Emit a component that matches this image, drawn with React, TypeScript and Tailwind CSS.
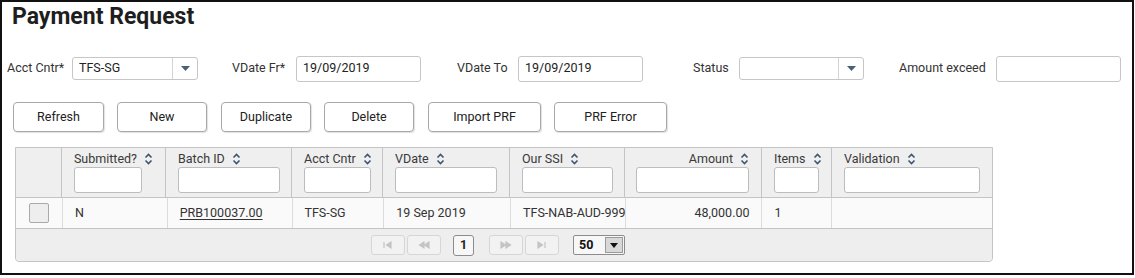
import React from 'react';

const cols = [
  { key: 'chk', label: '', width: 'w-[46px]', input: '' },
  { key: 'sub', label: 'Submitted?', width: 'w-[105px]', input: 'w-[68px]' },
  { key: 'batch', label: 'Batch ID', width: 'w-[126px]', input: 'w-[102px]' },
  { key: 'acct', label: 'Acct Cntr', width: 'w-[91px]', input: 'w-[67px]' },
  { key: 'vdate', label: 'VDate', width: 'w-[127px]', input: 'w-[102px]' },
  { key: 'ssi', label: 'Our SSI', width: 'w-[115px]', input: 'w-[91px]' },
  { key: 'amount', label: 'Amount', width: 'w-[137px]', input: 'w-[113px]', right: true },
  { key: 'items', label: 'Items', width: 'w-[70px]', input: 'w-[45px]' },
  { key: 'valid', label: 'Validation', width: 'w-[161px]', input: 'w-[136px]' },
];

function SortIcon() {
  return (
    <svg width="9" height="12" viewBox="0 0 9 12" fill="none" stroke="#3d5570" strokeWidth="1.6" className="shrink-0">
      <path d="M1.5 4.5L4.5 1.5L7.5 4.5" />
      <path d="M1.5 7.5L4.5 10.5L7.5 7.5" />
    </svg>
  );
}

function DownArrow() {
  return (
    <svg width="9" height="5" viewBox="0 0 9 5">
      <path d="M0 0H9L4.5 5Z" fill="#4a6078" />
    </svg>
  );
}

function FilterSelect({ value, width }: { value: string; width: string }) {
  return (
    <div className={`${width} h-[23px] flex items-stretch rounded-[3px] border border-[#c6c6c6] bg-white`}>
      <div className="flex-1 flex items-center pl-[6px] text-[#222]">{value}</div>
      <div className="w-[25px] border-l border-[#d4d4d4] flex items-center justify-center">
        <DownArrow />
      </div>
    </div>
  );
}

function FilterInput({ value, width }: { value: string; width: string }) {
  return (
    <div className={`${width} h-[26px] flex items-center rounded-[3px] border border-[#c6c6c6] bg-white pl-[6px] text-[#222]`}>
      {value}
    </div>
  );
}

function ActionButton({ label, width }: { label: string; width: string }) {
  return (
    <button className={`${width} h-[30px] rounded-[4px] border border-[#a8a8a8] bg-white text-[12.5px] text-[#222] shadow-[1px_1px_1px_rgba(0,0,0,0.12)]`}>
      {label}
    </button>
  );
}

function PagerButton({ kind }: { kind: 'first' | 'prev' | 'next' | 'last' }) {
  const glyph = {
    first: <><path d="M2 2V8" /><path d="M9 2L4.5 5L9 8Z" fill="#c4c4c4" /></>,
    prev: <><path d="M6 2L1.5 5L6 8Z" fill="#c4c4c4" /><path d="M11 2L6.5 5L11 8Z" fill="#c4c4c4" /></>,
    next: <><path d="M1 2L5.5 5L1 8Z" fill="#c4c4c4" /><path d="M6 2L10.5 5L6 8Z" fill="#c4c4c4" /></>,
    last: <><path d="M2 2L6.5 5L2 8Z" fill="#c4c4c4" /><path d="M9 2V8" /></>,
  }[kind];
  return (
    <div className="w-[34px] h-[20px] rounded-[3px] border border-[#d6d6d6] bg-[#f2f2f2] flex items-center justify-center">
      <svg width="12" height="10" viewBox="0 0 12 10" stroke="#c4c4c4" strokeWidth="1.2">
        {glyph}
      </svg>
    </div>
  );
}

export default function App() {
  return (
    <div className="w-[1134px] h-[275px] border-2 border-[#111] bg-white font-['Roboto',sans-serif] text-[12.5px] text-[#333]">
      {/* Title */}
      <h1 className="pt-[1px] pl-[10px] h-[29px] text-[23px] leading-[27px] font-bold text-[#1e1e1e]">Payment Request</h1>

      {/* Filters */}
      <div className="mt-[24px] h-[27px] flex items-center pl-[5px] whitespace-nowrap">
        <span className="w-[65px]">Acct Cntr*</span>
        <FilterSelect value="TFS-SG" width="w-[126px]" />
        <span className="ml-[34px] w-[64px]">VDate Fr*</span>
        <FilterInput value="19/09/2019" width="w-[125px]" />
        <span className="ml-[36px] w-[61px]">VDate To</span>
        <FilterInput value="19/09/2019" width="w-[125px]" />
        <span className="ml-[50px] w-[46px]">Status</span>
        <FilterSelect value="" width="w-[125px]" />
        <span className="ml-[35px] w-[97px]">Amount exceed</span>
        <FilterInput value="" width="w-[125px]" />
      </div>

      {/* Actions */}
      <div className="mt-[20px] flex items-center pl-[11px]">
        <ActionButton label="Refresh" width="w-[91px]" />
        <div className="ml-[13px]"><ActionButton label="New" width="w-[90px]" /></div>
        <div className="ml-[14px]"><ActionButton label="Duplicate" width="w-[90px]" /></div>
        <div className="ml-[13px]"><ActionButton label="Delete" width="w-[90px]" /></div>
        <div className="ml-[14px]"><ActionButton label="Import PRF" width="w-[113px]" /></div>
        <div className="ml-[13px]"><ActionButton label="PRF Error" width="w-[113px]" /></div>
      </div>

      {/* Grid */}
      <div className="mt-[15px] ml-[13px] w-[978px] border border-[#c4c4c4] rounded-b-[4px]">
        <div className="flex bg-[#efefef] border-b border-[#c4c4c4]">
          {cols.map((c, i) => (
            <div key={c.key} className={`${c.width} ${i > 0 ? 'border-l border-[#c4c4c4]' : ''} pt-[3px] pb-[4px] px-[12px] flex flex-col ${c.right ? 'items-end' : 'items-start'}`}>
              <div className="h-[16px] flex items-center gap-[7px] text-[#3a3a3a] whitespace-nowrap shrink-0">
                {c.label && <span>{c.label}</span>}
                {c.label && <SortIcon />}
              </div>
              {c.input && <div className={`${c.input} h-[26px] rounded-[3px] border border-[#bdbdbd] bg-white`} />}
            </div>
          ))}
        </div>

        <div className="flex h-[31px] bg-[#fafafa] border-b border-[#c4c4c4] whitespace-nowrap">
          <div className="w-[46px] flex items-center justify-center">
            <div className="w-[20px] h-[20px] rounded-[2px] border border-[#a9a9a9] bg-[#eeeeee]" />
          </div>
          <div className="w-[105px] border-l border-[#dcdcdc] flex items-center px-[12px]">N</div>
          <div className="w-[126px] border-l border-[#dcdcdc] flex items-center px-[12px]">
            <span className="underline underline-offset-2">PRB100037.00</span>
          </div>
          <div className="w-[91px] border-l border-[#dcdcdc] flex items-center px-[11px]">TFS-SG</div>
          <div className="w-[127px] border-l border-[#dcdcdc] flex items-center px-[12px]">19 Sep 2019</div>
          <div className="w-[115px] border-l border-[#dcdcdc] flex items-center pl-[12px] overflow-hidden">TFS-NAB-AUD-999</div>
          <div className="w-[137px] border-l border-[#dcdcdc] flex items-center justify-end px-[12px]">48,000.00</div>
          <div className="w-[70px] border-l border-[#dcdcdc] flex items-center px-[12px]">1</div>
          <div className="w-[161px] border-l border-[#dcdcdc]" />
        </div>

        <div className="h-[32px] bg-[#eeeeee] rounded-b-[4px] flex items-center pl-[355px]">
          <PagerButton kind="first" />
          <div className="ml-[2px]"><PagerButton kind="prev" /></div>
          <div className="ml-[12px] w-[21px] h-[21px] rounded-[3px] border border-[#8c8c8c] bg-[#f7f7f7] flex items-center justify-center font-bold text-[#222]">1</div>
          <div className="ml-[15px]"><PagerButton kind="next" /></div>
          <div className="ml-[2px]"><PagerButton kind="last" /></div>
          <div className="ml-[14px] w-[52px] h-[20px] rounded-[2px] border border-[#8c8c8c] bg-[#f7f7f7] flex items-center">
            <span className="pl-[5px] flex-1 font-bold text-[#111]">50</span>
            <div className="w-[18px] h-[16px] mr-[1px] bg-[#d8d8d8] border border-[#9a9a9a] flex items-center justify-center">
              <svg width="8" height="5" viewBox="0 0 8 5"><path d="M0 0H8L4 5Z" fill="#111" /></svg>
            </div>
          </div>
        </div>
      </div>
    </div>
  );
}
